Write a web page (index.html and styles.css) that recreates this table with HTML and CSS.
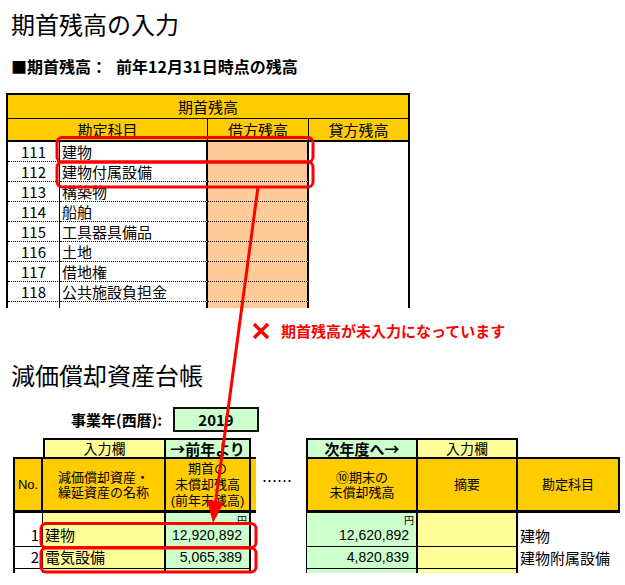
FILE: index.html
```html
<!DOCTYPE html>
<html lang="ja">
<head>
<meta charset="utf-8">
<title>期首残高の入力</title>
<link rel="stylesheet" href="styles.css">
</head>
<body>
<div class="page">
  <h1 class="title">期首残高の入力</h1>
  <p class="subtitle">■期首残高：<span class="gap"></span>前年12月31日時点の残高</p>

  <div class="tbl1">
    <div class="h-top">期首残高</div>
    <div class="h-sub span2">勘定科目</div>
    <div class="h-sub">借方残高</div>
    <div class="h-sub last">貸方残高</div>

    <div class="no">111</div><div class="nm">建物</div><div class="dr"></div><div class="cr"></div>
    <div class="no">112</div><div class="nm">建物付属設備</div><div class="dr"></div><div class="cr"></div>
    <div class="no">113</div><div class="nm">構築物</div><div class="dr"></div><div class="cr"></div>
    <div class="no">114</div><div class="nm">船舶</div><div class="dr"></div><div class="cr"></div>
    <div class="no">115</div><div class="nm">工具器具備品</div><div class="dr"></div><div class="cr"></div>
    <div class="no">116</div><div class="nm">土地</div><div class="dr"></div><div class="cr"></div>
    <div class="no">117</div><div class="nm">借地権</div><div class="dr"></div><div class="cr"></div>
    <div class="no">118</div><div class="nm">公共施設負担金</div><div class="dr"></div><div class="cr"></div>
    <div class="no"></div><div class="nm"></div><div class="dr"></div><div class="cr"></div>
  </div>

  <p class="notice"><svg class="x-icon" viewBox="0 0 18 18"><path d="M2 2 L16 16 M16 2 L2 16" stroke="#ff0000" stroke-width="3.4" fill="none"/></svg>期首残高が未入力になっています</p>

  <h1 class="title t2">減価償却資産台帳</h1>

  <div class="year-row">
    <span class="year-label">事業年(西暦):</span>
    <span class="year-box">2019</span>
  </div>

  <div class="ledger">
    <div class="lw">
      <div class="lt">
        <div class="blank"></div>
        <div class="ra yl first">入力欄</div>
        <div class="ra gr bold">→前年より</div>
        <div class="blank"></div>

        <div class="hb first small">No.</div>
        <div class="hb">減価償却資産・<br>繰延資産の名称</div>
        <div class="hb tall">期首の<br>未償却残高<br>(前年末残高)</div>
        <div class="hb extra"></div>

        <div class="dno">1</div>
        <div class="dnm yl">建物</div>
        <div class="dval gr"><span class="yen">円</span><span class="amt">12,920,892</span></div>
        <div class="blank"></div>

        <div class="dno">2</div>
        <div class="dnm yl">電気設備</div>
        <div class="dval gr"><span class="amt">5,065,389</span></div>
        <div class="blank"></div>

        <div class="dno"></div>
        <div class="dnm yl"></div>
        <div class="dval gr"></div>
        <div class="blank"></div>
      </div>
    </div>

    <div class="dots">……</div>

    <div class="rw">
      <div class="rt">
        <div class="ra gr first bold">次年度へ→</div>
        <div class="ra yl">入力欄</div>
        <div class="blank"></div>

        <div class="hb first">⑩期末の<br>未償却残高</div>
        <div class="hb">摘要</div>
        <div class="hb">勘定科目</div>

        <div class="rval gr"><span class="yen">円</span><span class="amt">12,620,892</span></div>
        <div class="rmemo yl"></div>
        <div class="racct">建物</div>

        <div class="rval gr"><span class="amt">4,820,839</span></div>
        <div class="rmemo yl"></div>
        <div class="racct">建物附属設備</div>

        <div class="rval gr"></div>
        <div class="rmemo yl"></div>
        <div class="racct"></div>
      </div>
    </div>
  </div>

  <svg class="overlay" viewBox="0 0 625 585" width="625" height="585">
    <g fill="none" stroke="#ff0000" stroke-width="3">
      <rect x="57" y="137.5" width="256" height="24.5" rx="5"/>
      <rect x="57" y="162" width="256" height="25" rx="5"/>
      <rect x="41" y="523.5" width="215" height="24" rx="5"/>
      <rect x="41" y="548" width="215" height="24" rx="5"/>
      <line x1="258" y1="187" x2="215.5" y2="503"/>
    </g>
    <polygon points="207,500 224,502.5 213,523" fill="#ff0000"/>
  </svg>
</div>
</body>
</html>
```

FILE: styles.css
```css
* {
  box-sizing: border-box;
}

html,
body {
  margin: 0;
  padding: 0;
  background: #fff;
}

body {
  font-family: "Noto Sans CJK JP", "Noto Sans", sans-serif;
  color: #000;
}

.page {
  position: relative;
  width: 625px;
  height: 585px;
  overflow: hidden;
  padding-top: 10px;
}

.title {
  margin: 0;
  padding-left: 11px;
  font-size: 24px;
  font-weight: 400;
  line-height: 28px;
  height: 28px;
}

.t2 {
  margin-top: 20px;
}

.subtitle {
  margin: 18px 0 0;
  padding-left: 11px;
  font-size: 16px;
  font-weight: 700;
  line-height: 20px;
  height: 20px;
  white-space: nowrap;
}

.gap {
  display: inline-block;
  width: 9px;
}

/* ---------- 期首残高 table ---------- */
.tbl1 {
  margin: 17px 0 0 6px;
  width: 404px;
  height: 215px;
  overflow: hidden;
  border: 2px solid #000;
  border-bottom: 0;
  display: grid;
  grid-template-columns: 52px 148px 101px 99px;
  grid-template-rows: 24px 23px;
  grid-auto-rows: 20px;
  font-size: 15px;
  line-height: 19px;
}

.h-top,
.h-sub {
  background: #ffcc00;
  display: flex;
  align-items: center;
  justify-content: center;
}

.h-top {
  grid-column: 1 / 5;
  border-bottom: 1px solid #000;
}

.h-sub {
  border-bottom: 2px solid #000;
  border-right: 1px solid #000;
}

.h-sub.span2 {
  grid-column: span 2;
}

.h-sub.last {
  border-right: 0;
}

.no,
.nm,
.dr {
  border-bottom: 1px dotted #000;
  display: flex;
  align-items: center;
}

.no {
  justify-content: center;
  border-right: 1px solid #000;
}

.nm {
  padding-left: 2px;
  border-right: 2px solid #000;
  white-space: nowrap;
}

.dr {
  background: #ffcc99;
  border-right: 2px solid #000;
}

/* ---------- notice ---------- */
.notice {
  margin: 13px 0 0;
  padding-left: 252px;
  height: 20px;
  display: flex;
  align-items: center;
  color: #ff0000;
  font-size: 15px;
  font-weight: 700;
  line-height: 20px;
  white-space: nowrap;
}

.x-icon {
  width: 18px;
  height: 18px;
  margin-right: 11px;
  flex: none;
}

/* ---------- year ---------- */
.year-row {
  margin-top: 18px;
  height: 25px;
  display: flex;
  align-items: center;
  padding-left: 71px;
}

.year-label {
  width: 102px;
  font-size: 15px;
  font-weight: 700;
  white-space: nowrap;
}

.year-box {
  width: 86px;
  height: 25px;
  border: 2px solid #111;
  background: #ccffcc;
  font-size: 15px;
  font-weight: 700;
  line-height: 21px;
  text-align: center;
}

/* ---------- ledger ---------- */
.ledger {
  margin-top: 6px;
  height: 135px;
  display: flex;
  overflow: hidden;
}

.lw {
  margin-left: 13px;
  width: 243px;
  height: 135px;
  overflow: hidden;
  flex: none;
}

.lt,
.rt {
  display: grid;
  grid-template-rows: 19px 56px 34px 22px 22px;
  font-size: 13px;
  line-height: 15px;
}

.lt {
  width: 278px;
  grid-template-columns: 30px 123px 85px 40px;
}

.rw {
  width: 314px;
  flex: none;
}

.rt {
  width: 314px;
  grid-template-columns: 112px 100px 102px;
}

.yl {
  background: #ffff99;
}

.gr {
  background: #ccffcc;
}

.bold {
  font-weight: 700;
  font-size: 15px !important;
}

.ra {
  border-top: 2px solid #000;
  border-right: 2px solid #000;
  display: flex;
  align-items: center;
  justify-content: center;
  font-size: 14px;
  line-height: 17px;
  white-space: nowrap;
}

.ra.first {
  border-left: 2px solid #000;
}

.hb {
  background: #ffcc00;
  border-top: 2px solid #000;
  border-bottom: 3px solid #000;
  border-right: 2px solid #000;
  display: flex;
  align-items: center;
  justify-content: center;
  text-align: center;
  white-space: nowrap;
  font-family: "Liberation Sans", "Noto Sans CJK JP", sans-serif;
  line-height: 15px;
}

.hb.first {
  border-left: 2px solid #000;
}

.hb.tall {
  line-height: 16px;
}

.hb.small {
  font-size: 13px;
}

.hb.extra {
  border-right: 0;
}

.dno {
  border-left: 2px solid #000;
  border-right: 1px solid #000;
  border-bottom: 1px solid #000;
  display: flex;
  align-items: flex-end;
  justify-content: flex-end;
  padding: 0 3px 3px 0;
  font-size: 15px;
  line-height: 17px;
}

.dnm {
  border-right: 2px solid #000;
  border-bottom: 1px solid #000;
  display: flex;
  align-items: flex-end;
  padding: 0 0 3px 2px;
  font-size: 15px;
  line-height: 17px;
  white-space: nowrap;
}

.dval,
.rval {
  border-right: 2px solid #000;
  border-bottom: 1px solid #000;
  display: flex;
  flex-direction: column;
  align-items: flex-end;
  justify-content: flex-end;
  padding: 0 0 3px 0;
}

.rval {
  border-left: 1px solid #000;
}

.yen {
  font-family: "Liberation Sans", "Noto Sans CJK JP", sans-serif;
  font-size: 10px;
  line-height: 11px;
  margin: 0 2px auto 0;
  padding-top: 2px;
}

.amt {
  font-family: "Liberation Sans", "Noto Sans CJK JP", sans-serif;
  font-size: 14px;
  line-height: 16px;
  padding-right: 7px;
  white-space: nowrap;
}

.rmemo {
  border-right: 2px solid #000;
  border-bottom: 1px solid #000;
}

.racct {
  display: flex;
  align-items: flex-end;
  padding: 0 0 3px 2px;
  font-size: 15px;
  line-height: 17px;
  white-space: nowrap;
}

.dots {
  width: 50px;
  flex: none;
  padding: 35px 0 0 6px;
  font-size: 15px;
  line-height: 15px;
  white-space: nowrap;
}

/* ---------- annotations ---------- */
.overlay {
  position: absolute;
  left: 0;
  top: 0;
  pointer-events: none;
}
```
